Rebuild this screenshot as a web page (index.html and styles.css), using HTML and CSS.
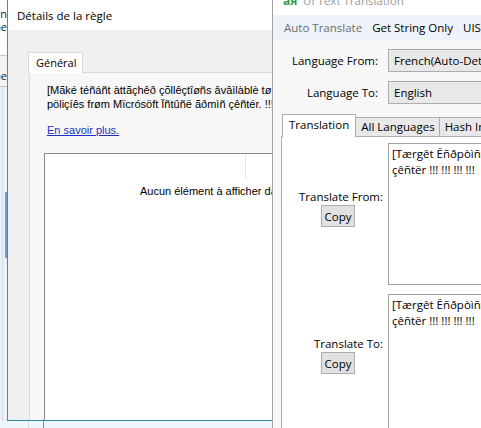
FILE: index.html
```html
<!DOCTYPE html>
<html lang="fr">
<head>
<meta charset="utf-8">
<title>Détails de la règle</title>
<link rel="stylesheet" href="styles.css">
</head>
<body>
<div class="bgwin">
  <div class="bg-top">
    <div class="bg-line">Domain</div>
    <div class="bg-line">Nome</div>
  </div>
  <div class="bg-mid">
    <div class="bg-line">Type</div>
  </div>
  <div class="bg-rest"><div class="bg-thumb"></div></div>
</div>

<div class="dialog">
  <div class="dlg-title">Détails de la règle</div>
  <div class="dlg-body">
    <div class="dlg-tabs"><div class="dlg-tab">Général</div></div>
    <div class="dlg-page">
      <p class="desc">[Mãké téñáñt àttãçhêð çõllêçtîøñs âvâìlàblè tø ùšê ïñ<br>pöliçíês frøm Mïcrósöft Ïñtûñë ãðmìñ çêñtér. !!! !!! !!!</p>
      <a class="link" href="#">En savoir plus.</a>
      <div class="listview">
        <div class="lv-head"><div class="lv-col"></div></div>
        <div class="lv-empty">Aucun élément à afficher dans cette vue.</div>
      </div>
    </div>
  </div>
</div>
<div class="under"><div class="under-a"></div><div class="under-b"></div></div>

<div class="transwin">
  <div class="tw-title"><span class="tw-icon">aя</span><span class="tw-title-text">UI Text Translation</span></div>
  <div class="toolbar">
    <div class="grip"></div>
    <div class="tb-item disabled">Auto Translate</div>
    <div class="tb-sep"></div>
    <div class="tb-item">Get String Only</div>
    <div class="tb-sep"></div>
    <div class="tb-item">UIString</div>
  </div>
  <div class="form">
    <div class="f-label">Language From:</div>
    <div class="combo">French(Auto-Detected)</div>
    <div class="f-label">Language To:</div>
    <div class="combo">English</div>
  </div>
  <div class="tw-tabs">
    <div class="tw-tab active">Translation</div>
    <div class="tw-tab">All Languages</div>
    <div class="tw-tab">Hash Info</div>
  </div>
  <div class="panel">
    <div class="p-cell first">
      <div class="p-label">Translate From:</div>
      <button class="copy">Copy</button>
    </div>
    <div class="textbox">[Tærgêt Ēñðpòìñt Šéçüřïtÿ àttãçhêð<br>çêñtër !!! !!! !!! !!!</div>
    <div class="p-cell second">
      <div class="p-label">Translate To:</div>
      <button class="copy">Copy</button>
    </div>
    <div class="textbox">[Tærgêt Ēñðpòìñt Šéçüřïtÿ àttãçhêð<br>çêñtër !!! !!! !!! !!!</div>
  </div>
</div>
</body>
</html>
```
FILE: styles.css
```css
html, body {
  margin: 0;
  padding: 0;
}
body {
  width: 481px;
  height: 428px;
  overflow: hidden;
  position: relative;
  background: #eef6fb;
  font-family: "Liberation Sans", Arial, sans-serif;
}

/* background window at the far left */
.bgwin {
  position: absolute;
  left: 0;
  top: 0;
  width: 7px;
  height: 421px;
  display: flex;
  flex-direction: column;
  overflow: hidden;
  background: #eaf0f6;
}
.bg-top {
  height: 48px;
  background: #ffffff;
  padding-top: 7px;
  border-bottom: 1px solid #c8c8c8;
}
.bg-mid {
  height: 17px;
  padding-top: 13px;
  background: #f3f3f3;
  border-bottom: 1px solid #c8c8c8;
}
.bg-line {
  display: flex;
  justify-content: flex-end;
  white-space: nowrap;
  font-family: "Open Sans", sans-serif;
  font-size: 11px;
  line-height: 13px;
  color: #222;
}
.bg-rest {
  flex: 1;
  position: relative;
  border-left: 1px solid #d3dde8;
  margin-left: 2px;
}
.bg-thumb {
  position: absolute;
  right: 0;
  top: 105px;
  width: 2px;
  height: 66px;
  background: #6e9fd1;
}

/* dialog */
.dialog {
  position: absolute;
  left: 7px;
  top: 0;
  width: 300px;
  height: 420px;
  border-left: 1px solid #3a8fcb;
  border-bottom: 1px solid #2f8a9e;
  background: #f0f0f0;
  display: flex;
  flex-direction: column;
  overflow: hidden;
}
.dlg-title {
  height: 30px;
  flex: none;
  background: #ffffff;
  padding-left: 9px;
  font-family: "Open Sans", sans-serif;
  font-size: 11.5px;
  line-height: 31px;
  color: #000;
}
.dlg-body {
  flex: 1;
  display: flex;
  flex-direction: column;
  padding: 22px 0 0 20px;
  min-height: 0;
}
.dlg-tabs {
  display: flex;
  position: relative;
  z-index: 1;
}
.dlg-tab {
  height: 21px;
  box-sizing: border-box;
  margin-bottom: -1px;
  padding: 0 6px 0 7px;
  border: 1px solid #d9d9d9;
  border-bottom: none;
  background: #ffffff;
  font-family: "Open Sans", sans-serif;
  font-size: 11px;
  line-height: 20px;
  color: #000;
}
.dlg-page {
  flex: 1;
  margin-left: 1px;
  border-left: 1px solid #d9d9d9;
  border-top: 1px solid #d9d9d9;
  background: #f7f7f7;
  padding: 10px 0 0 14px;
  display: flex;
  flex-direction: column;
  min-height: 0;
}
.desc {
  margin: 0;
  padding-left: 3px;
  font-size: 11px;
  line-height: 14px;
  white-space: nowrap;
  color: #000;
}
.link {
  margin-top: 12px;
  margin-left: 3px;
  font-size: 11px;
  line-height: 14px;
  color: #1c2fc2;
  text-decoration: underline;
  align-self: flex-start;
}
.listview {
  margin-top: 16px;
  flex: 1;
  background: #ffffff;
  border-left: 1px solid #8a8a8a;
  border-top: 1px solid #8a8a8a;
}
.lv-head {
  height: 24px;
  display: flex;
}
.lv-col {
  width: 200px;
  border-right: 1px solid #e3e3e3;
}
.lv-empty {
  margin-top: 6px;
  padding-left: 95px;
  font-size: 11px;
  line-height: 14px;
  white-space: nowrap;
  color: #000;
}
.under {
  position: absolute;
  left: 7px;
  top: 421px;
  width: 265px;
  height: 7px;
  background: #eef7fc;
}
.under-a, .under-b {
  position: absolute;
  top: 0;
  width: 1px;
  height: 7px;
}
.under-a { left: 21px; background: #d9d9d9; }
.under-b { left: 36px; background: #8a8a8a; }

/* translation window */
.transwin {
  position: absolute;
  left: 272px;
  top: -10px;
  width: 230px;
  height: 440px;
  border-left: 1px solid #a3a3a3;
  background: #f7f7f7;
  font-family: "Open Sans", sans-serif;
  font-size: 11.5px;
  color: #000;
  display: flex;
  flex-direction: column;
  overflow: hidden;
}
.tw-title {
  height: 25px;
  flex: none;
  background: #ffffff;
  display: flex;
  align-items: flex-start;
  padding-left: 10px;
  line-height: 22px;
  white-space: nowrap;
}
.tw-icon {
  color: #2f9b47;
  font-weight: bold;
  font-size: 12px;
  width: 20px;
}
.tw-title-text {
  color: #9a9a9a;
  font-size: 11.5px;
}
.toolbar {
  height: 25px;
  flex: none;
  background: #eef3f9;
  display: flex;
  align-items: center;
  white-space: nowrap;
}
.grip {
  width: 2px;
  height: 15px;
  margin-left: 6px;
  background: repeating-linear-gradient(to bottom, #707070 0 2px, transparent 2px 4px);
}
.tb-item {
  padding: 0 5px;
  line-height: 20px;
}
.tb-item.disabled {
  color: #6d6d6d;
}
.tb-sep {
  width: 1px;
  height: 18px;
  background: #c6cbd2;
}
.form {
  display: grid;
  grid-template-columns: 105px 200px;
  column-gap: 10px;
  row-gap: 9px;
  padding-top: 9px;
  flex: none;
}
.f-label {
  text-align: right;
  align-self: center;
  white-space: nowrap;
}
.combo {
  height: 23px;
  box-sizing: border-box;
  border: 1px solid #acacac;
  background: #e8e8e8;
  padding-left: 5px;
  line-height: 21px;
  white-space: nowrap;
  overflow: hidden;
}
.tw-tabs {
  display: flex;
  align-items: flex-end;
  margin-top: 9px;
  padding-left: 9px;
  height: 23px;
  flex: none;
  position: relative;
  z-index: 1;
  white-space: nowrap;
}
.tw-tab {
  height: 19px;
  box-sizing: border-box;
  border: 1px solid #acacac;
  border-bottom: none;
  border-left: none;
  background: #e8e8e8;
  padding: 0 4px 0 5px;
  line-height: 18px;
}
.tw-tab.active {
  height: 23px;
  margin-bottom: -1px;
  border-left: 1px solid #acacac;
  background: #ffffff;
  padding: 0 6px;
  line-height: 20px;
}
.panel {
  flex: 1;
  margin-left: 8px;
  border-left: 1px solid #acacac;
  border-top: 1px solid #acacac;
  background: #ffffff;
  display: grid;
  grid-template-columns: 101px 200px;
  grid-template-rows: 142px 142px;
  column-gap: 5px;
  row-gap: 9px;
  padding-top: 6px;
  align-content: start;
}
.p-cell {
  display: flex;
  flex-direction: column;
  align-items: flex-end;
}
.p-cell.first { padding-top: 46px; }
.p-cell.second { padding-top: 42px; }
.p-label {
  line-height: 15px;
  white-space: nowrap;
}
.copy {
  align-self: flex-start;
  margin-left: 39px;
  margin-top: 1px;
  width: 34px;
  height: 22px;
  padding: 0;
  border: 1px solid #adadad;
  background: #e1e1e1;
  font-family: "Open Sans", sans-serif;
  font-size: 11.5px;
  color: #000;
}
.textbox {
  box-sizing: border-box;
  border: 1px solid #a0a0a0;
  background: #ffffff;
  padding: 2px 3px;
  line-height: 16px;
  white-space: nowrap;
  overflow: hidden;
}
```
